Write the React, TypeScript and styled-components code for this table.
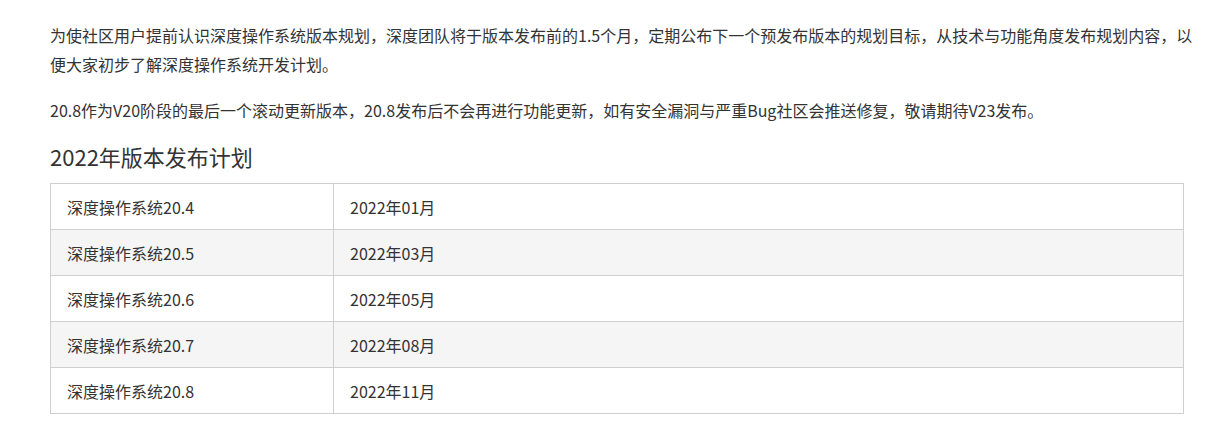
import React from "react";
import styled, { createGlobalStyle } from "styled-components";

const GlobalStyle = createGlobalStyle`
  body {
    margin: 0;
    background: #fff;
    font-family: "Noto Sans CJK SC", "Noto Sans", sans-serif;
    color: #333;
  }
`;

const Page = styled.div`
  padding: 21px 0 0 50px;
  width: 1152px;
`;

const Paragraph = styled.p`
  margin: 0 0 17px;
  font-size: 16px;
  line-height: 29px;
`;

const Heading = styled.h3`
  margin: 0 0 13px;
  font-size: 22px;
  font-weight: normal;
  line-height: 28px;
  color: #333;
`;

const Table = styled.table`
  width: 1134px;
  border-collapse: collapse;
  font-size: 16px;
`;

const Row = styled.tr<{ $striped: boolean }>`
  background: ${(p) => (p.$striped ? "#f5f5f5" : "#fff")};
`;

const Cell = styled.td<{ $w?: number }>`
  border: 1px solid #cfcfcf;
  height: 46px;
  padding: 0 16px;
  box-sizing: border-box;
  width: ${(p) => (p.$w ? `${p.$w}px` : "auto")};
  line-height: 20px;
`;

const releases = [
  { name: "深度操作系统20.4", date: "2022年01月" },
  { name: "深度操作系统20.5", date: "2022年03月" },
  { name: "深度操作系统20.6", date: "2022年05月" },
  { name: "深度操作系统20.7", date: "2022年08月" },
  { name: "深度操作系统20.8", date: "2022年11月" },
];

const App = () => {
  return (
    <>
      <GlobalStyle />
      <Page>
        <Paragraph>
          为使社区用户提前认识深度操作系统版本规划，深度团队将于版本发布前的1.5个月，定期公布下一个预发布版本的规划目标，从技术与功能角度发布规划内容，以便大家初步了解深度操作系统开发计划。
        </Paragraph>
        <Paragraph>
          20.8作为V20阶段的最后一个滚动更新版本，20.8发布后不会再进行功能更新，如有安全漏洞与严重Bug社区会推送修复，敬请期待V23发布。
        </Paragraph>
        <Heading>2022年版本发布计划</Heading>
        <Table>
          <tbody>
            {releases.map((r, i) => (
              <Row key={r.name} $striped={i % 2 === 1}>
                <Cell $w={283}>{r.name}</Cell>
                <Cell>{r.date}</Cell>
              </Row>
            ))}
          </tbody>
        </Table>
      </Page>
    </>
  );
};

export default App;
